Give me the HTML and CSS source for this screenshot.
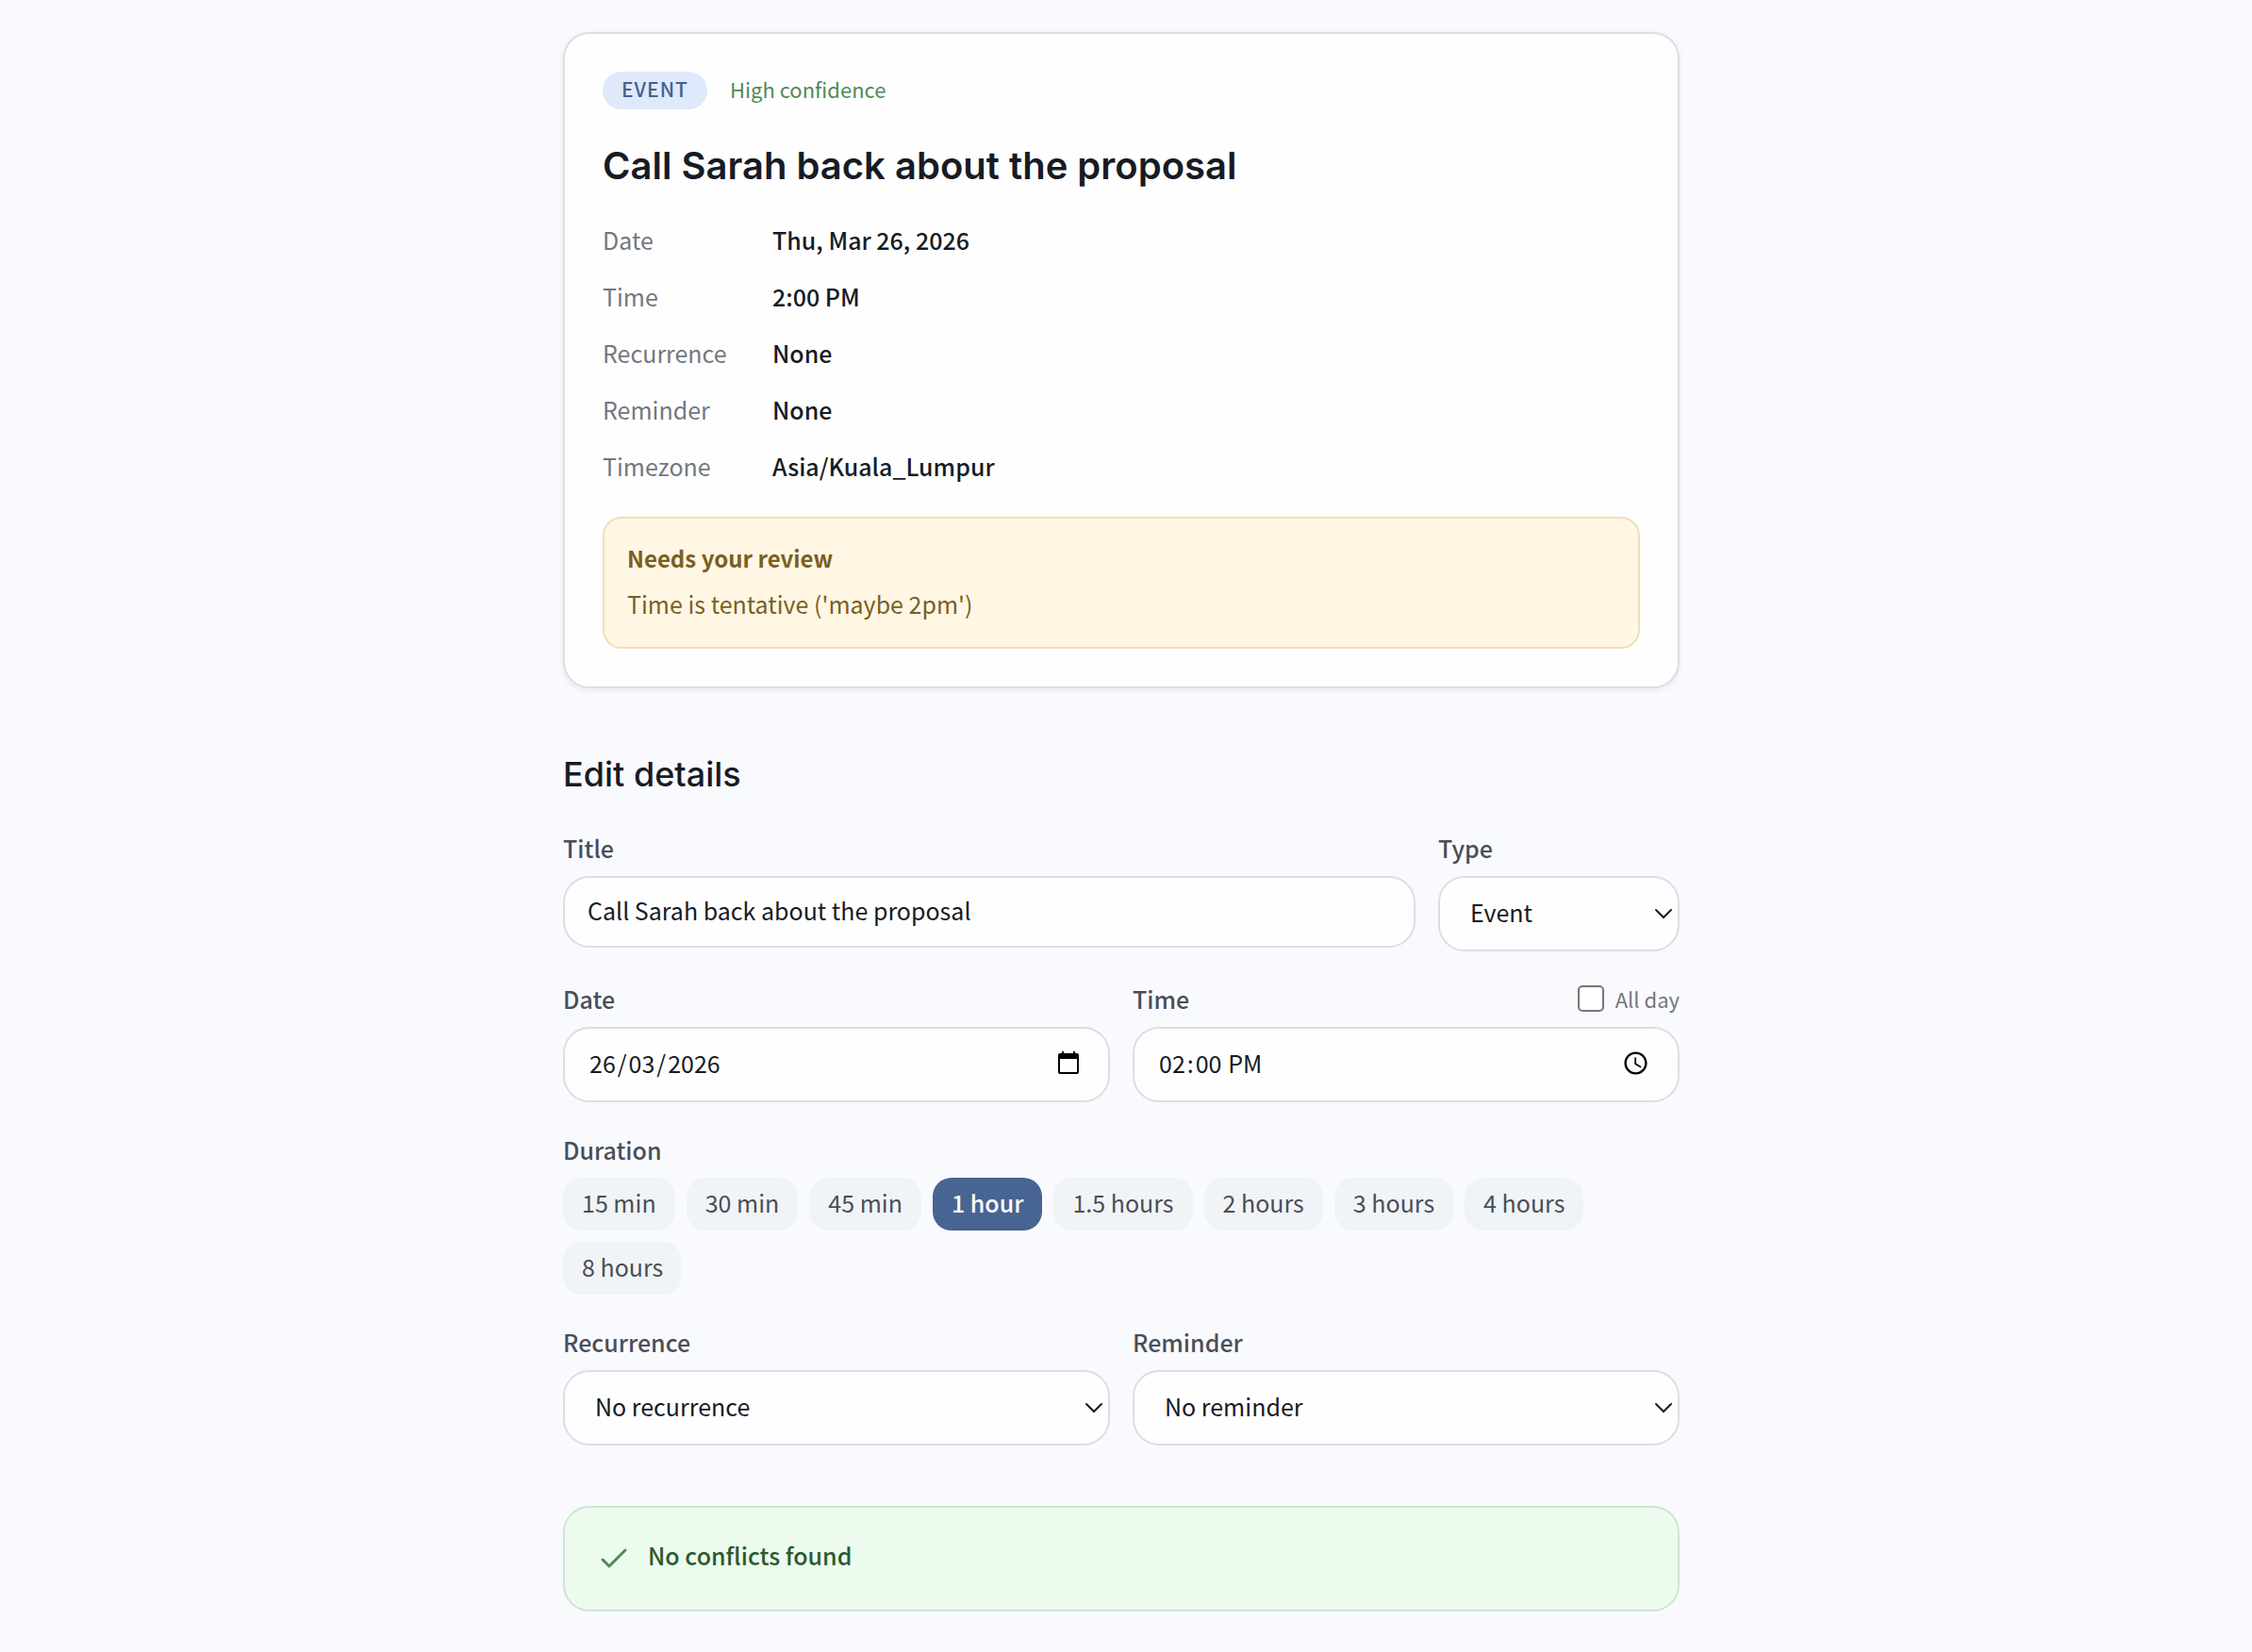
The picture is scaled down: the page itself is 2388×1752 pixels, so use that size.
FILE: index.html
```html
<!DOCTYPE html>
<html lang="en">
<head>
<meta charset="utf-8">
<meta name="viewport" content="width=device-width, initial-scale=1">
<title>Review event</title>
<link rel="stylesheet" href="styles.css">
</head>
<body>
<main class="page">
  <section class="card">
    <div class="card-meta">
      <span class="badge">EVENT</span>
      <span class="confidence">High confidence</span>
    </div>
    <h1 class="card-title">Call Sarah back about the proposal</h1>
    <dl class="facts">
      <dt>Date</dt><dd>Thu, Mar 26, 2026</dd>
      <dt>Time</dt><dd>2:00 PM</dd>
      <dt>Recurrence</dt><dd>None</dd>
      <dt>Reminder</dt><dd>None</dd>
      <dt>Timezone</dt><dd>Asia/Kuala_Lumpur</dd>
    </dl>
    <div class="review">
      <strong class="review-title">Needs your review</strong>
      <p class="review-text">Time is tentative ('maybe 2pm')</p>
    </div>
  </section>

  <form class="editor">
    <h2 class="section-title">Edit details</h2>

    <div class="row row-title">
      <div class="field">
        <label class="label" for="title">Title</label>
        <input class="control control-text" id="title" type="text" value="Call Sarah back about the proposal">
      </div>
      <div class="field">
        <label class="label" for="type">Type</label>
        <div class="select">
          <select class="control" id="type"><option>Event</option><option>Task</option></select>
          <svg class="chevron" viewBox="0 0 20 12" aria-hidden="true"><path d="M2 2l8 8 8-8"/></svg>
        </div>
      </div>
    </div>

    <div class="row row-half">
      <div class="field">
        <label class="label" for="day">Date</label>
        <div class="control picker">
          <div class="date-parts">
            <input class="date-part" id="day" type="text" inputmode="numeric" maxlength="2" value="26">/<input class="date-part" type="text" inputmode="numeric" maxlength="2" aria-label="Month" value="03">/<input class="date-part date-year" type="text" inputmode="numeric" maxlength="4" aria-label="Year" value="2026">
          </div>
          <button class="picker-button" type="button" aria-label="Open calendar">
            <svg viewBox="0 0 24 24" aria-hidden="true"><path fill-rule="evenodd" d="M5 0h2v2h10V0h2v2h2a2 2 0 0 1 2 2v18a2 2 0 0 1-2 2H3a2 2 0 0 1-2-2V4a2 2 0 0 1 2-2h2zM3 8v14h18V8z"/></svg>
          </button>
        </div>
      </div>
      <div class="field">
        <div class="label-line">
          <label class="label" for="time">Time</label>
          <label class="all-day"><input class="checkbox" type="checkbox">All day</label>
        </div>
        <input class="control control-time" id="time" type="time" value="14:00">
      </div>
    </div>

    <fieldset class="durations">
      <legend class="label">Duration</legend>
      <div class="chips">
        <button class="chip" type="button">15 min</button>
        <button class="chip" type="button">30 min</button>
        <button class="chip" type="button">45 min</button>
        <button class="chip chip-active" type="button" aria-pressed="true">1 hour</button>
        <button class="chip" type="button">1.5 hours</button>
        <button class="chip" type="button">2 hours</button>
        <button class="chip" type="button">3 hours</button>
        <button class="chip" type="button">4 hours</button>
        <button class="chip" type="button">8 hours</button>
      </div>
    </fieldset>

    <div class="row row-half">
      <div class="field">
        <label class="label" for="recurrence">Recurrence</label>
        <div class="select">
          <select class="control" id="recurrence"><option>No recurrence</option></select>
          <svg class="chevron" viewBox="0 0 20 12" aria-hidden="true"><path d="M2 2l8 8 8-8"/></svg>
        </div>
      </div>
      <div class="field">
        <label class="label" for="reminder">Reminder</label>
        <div class="select">
          <select class="control" id="reminder"><option>No reminder</option></select>
          <svg class="chevron" viewBox="0 0 20 12" aria-hidden="true"><path d="M2 2l8 8 8-8"/></svg>
        </div>
      </div>
    </div>
  </form>

  <div class="notice" role="status">
    <svg class="notice-icon" viewBox="0 0 32 32" aria-hidden="true"><path d="M4 17l7 7L28 7"/></svg>
    <p class="notice-text">No conflicts found</p>
  </div>
</main>
</body>
</html>
```
FILE: styles.css
```css
:root {
  --bg: #f9fafe;
  --surface: #fefefe;
  --line: #dcdee5;
  --text: #171b24;
  --label: #4a4e57;
  --muted: #74777f;
  --primary: #486492;
}

* {
  box-sizing: border-box;
}

body {
  margin: 0;
  padding: 34px 34px 40px 24px;
  background: var(--bg);
  color: var(--text);
  font-family: "Noto Sans CJK SC", "Noto Sans", sans-serif;
  font-size: 25px;
  line-height: 36px;
}

h1, h2, p, dl, dd {
  margin: 0;
}

input, select, button {
  font: inherit;
  color: inherit;
}

.page {
  max-width: 1184px;
  margin: 0 auto;
}

.card {
  padding: 40px;
  background: var(--surface);
  border: 2px solid var(--line);
  border-radius: 28px;
  box-shadow: 0 2px 6px rgba(23, 27, 36, 0.08);
}

.card-meta {
  display: flex;
  align-items: center;
  gap: 24px;
}

.badge {
  padding: 0 20px 4px;
  border-radius: 20px;
  background: #dfe9fb;
  color: #45618f;
  font-size: 21px;
  font-weight: 500;
  letter-spacing: 1px;
}

.confidence {
  padding-bottom: 4px;
  color: #4f8a57;
  font-size: 22px;
}

.card-title {
  margin-top: 32px;
  font-family: Inter, sans-serif;
  font-size: 40px;
  font-weight: 600;
  line-height: 56px;
}

.facts {
  display: grid;
  grid-template-columns: 160px 1fr;
  gap: 24px 20px;
  margin-top: 32px;
}

.facts dt {
  color: var(--muted);
}

.facts dd {
  font-weight: 500;
}

.review {
  margin-top: 36px;
  padding: 18px 24px 22px;
  border: 2px solid #f0dfb8;
  border-radius: 20px;
  background: #fff6e4;
  color: #7a5f1f;
  line-height: 48px;
}

.review-title {
  display: block;
  font-size: 24px;
  font-weight: 700;
}

.editor {
  display: flex;
  flex-direction: column;
  gap: 32px;
  margin-top: 63px;
}

.section-title {
  font-family: Inter, sans-serif;
  font-size: 36px;
  font-weight: 500;
  line-height: 56px;
}

.row {
  display: grid;
  align-items: start;
  gap: 24px;
}

.row-title {
  grid-template-columns: 1fr 256px;
}

.row-half {
  grid-template-columns: 1fr 1fr;
}

.field {
  display: flex;
  flex-direction: column;
  gap: 12px;
}

.label {
  padding: 0;
  color: var(--label);
  font-weight: 500;
}

.label-line {
  display: flex;
  justify-content: space-between;
}

.all-day {
  display: flex;
  align-items: center;
  gap: 12px;
  color: var(--muted);
  font-size: 22px;
}

.checkbox {
  appearance: none;
  width: 28px;
  height: 28px;
  margin: 0;
  border: 2px solid #767676;
  border-radius: 5px;
  background: #ffffff;
}

.control {
  width: 100%;
  height: 80px;
  padding: 0 24px 4px;
  border: 2px solid var(--line);
  border-radius: 28px;
  background: var(--surface);
}

.control-text {
  height: 76px;
}

.select {
  display: grid;
  align-items: center;
}

.select > * {
  grid-area: 1 / 1;
}

.select .control {
  appearance: none;
  padding: 0 32px 4px;
}

.chevron {
  justify-self: end;
  width: 20px;
  height: 12px;
  margin-right: 7px;
  fill: none;
  stroke: var(--text);
  stroke-width: 2;
  stroke-linecap: round;
  pointer-events: none;
}

.picker {
  display: flex;
  align-items: center;
  justify-content: space-between;
  padding-right: 30px;
}

.date-parts {
  display: flex;
  align-items: center;
}

.date-part {
  box-sizing: content-box;
  width: 2ch;
  padding: 0 2px;
  border: 0;
  background: none;
}

.date-year {
  width: 4ch;
}

.picker-button {
  display: flex;
  padding: 0;
  border: 0;
  background: none;
}

.picker-button svg {
  width: 24px;
  height: 24px;
  fill: #000000;
}

.control-time {
  padding-right: 30px;
}

.control-time::-webkit-datetime-edit-hour-field,
.control-time::-webkit-datetime-edit-minute-field,
.control-time::-webkit-datetime-edit-ampm-field {
  padding: 0 2px;
}

.control-time::-webkit-calendar-picker-indicator {
  width: 29px;
  height: 29px;
  padding: 0;
}

.durations {
  min-width: 0;
  margin: 0;
  padding: 0;
  border: 0;
}

.chips {
  display: flex;
  flex-wrap: wrap;
  gap: 12px;
  margin-top: 12px;
}

.chip {
  height: 56px;
  padding: 0 20px 4px;
  border: 0;
  border-radius: 20px;
  background: #f1f4f7;
  color: var(--label);
}

.chip-active {
  background: var(--primary);
  color: #ffffff;
  font-weight: 500;
}

.notice {
  display: flex;
  align-items: center;
  gap: 20px;
  margin-top: 64px;
  padding: 34px 36px;
  border: 2px solid #cde6d0;
  border-radius: 28px;
  background: #ecfbed;
  color: #2a5a32;
  font-weight: 500;
}

.notice-icon {
  width: 32px;
  height: 32px;
  fill: none;
  stroke: #4f8a57;
  stroke-width: 3;
  stroke-linecap: round;
  stroke-linejoin: round;
}

.notice-text {
  padding-bottom: 8px;
  line-height: 32px;
}
```
